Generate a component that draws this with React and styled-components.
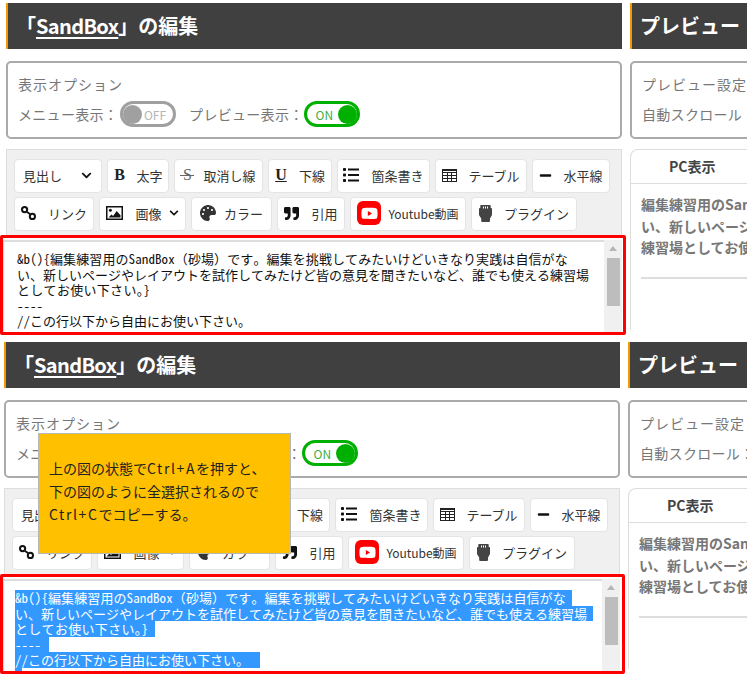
import React from "react";
import styled, { createGlobalStyle } from "styled-components";
import { FaMinus, FaChevronDown, FaPalette, FaQuoteRight, FaYoutube } from "react-icons/fa";

const GlobalStyle = createGlobalStyle`
  html, body { margin: 0; padding: 0; background: #fff; }
  body {
    width: 747px;
    height: 678px;
    overflow: hidden;
    font-family: "Noto Sans CJK JP", "Noto Sans", sans-serif;
  }
`;

const Page = styled.div`
  position: relative;
  width: 747px;
  height: 678px;
  overflow: hidden;
`;

const Capture = styled.div`
  display: grid;
  grid-template-columns: 616px 616px;
  column-gap: 8px;
  width: 1240px;
  height: 336px;
  padding: 3px 0 0 ${(p) => p.$left}px;
`;

const Column = styled.div`
  display: flex;
  flex-direction: column;
  min-width: 0;
`;

const PanelTitle = styled.h2`
  margin: 0 0 12px;
  height: 46px;
  box-sizing: border-box;
  padding-left: 8px;
  border-left: 2px solid #f39800;
  background: #404040;
  color: #fff;
  font-size: 20px;
  font-weight: 700;
  line-height: 46px;
  white-space: nowrap;

  a {
    color: #fff;
    letter-spacing: -0.65px;
    text-decoration: underline;
    text-underline-offset: 3px;
  }
`;

const OptionsBox = styled.div`
  height: 78px;
  box-sizing: border-box;
  margin-bottom: 10px;
  padding: 8px 10px 0;
  border: 2px solid #aaa;
  border-radius: 5px;
  color: #777;
  font-size: 14px;
  white-space: nowrap;
`;

const OptionsTitle = styled.div`
  height: 26px;
  line-height: 26px;
  letter-spacing: 1px;
`;

const OptionsRow = styled.div`
  display: flex;
  align-items: center;
  height: 30px;
  margin-top: 2px;
`;

const OptionLabel = styled.span`
  margin-right: ${(p) => p.$gap}px;
  letter-spacing: 0.3px;
`;

const Toggle = styled.div`
  display: flex;
  justify-content: space-between;
  align-items: center;
  width: 56px;
  height: 26px;
  box-sizing: border-box;
  margin-right: 13px;
  padding: ${(p) => (p.$on ? "0 0 0 9px" : "0 7px 0 0")};
  border: 3px solid ${(p) => (p.$on ? "#00b000" : "#a0a0a0")};
  border-radius: 13px;
  color: ${(p) => (p.$on ? "#3fae3f" : "#b5b5b5")};
  font-size: 12px;

  i {
    width: 19px;
    height: 19px;
    border-radius: 50%;
    background: ${(p) => (p.$on ? "#00b000" : "#a0a0a0")};
  }
`;

const EditorBox = styled.div`
  height: 186px;
  box-sizing: border-box;
  padding: 9px 0 0 7px;
  border: 1px solid #ddd;
  border-bottom: 0;
  background: #f0f0f0;
`;

const ToolRow = styled.div`
  display: flex;
  gap: 5px;
  height: 34px;
  margin-bottom: 4px;
`;

const ToolButton = styled.div`
  display: flex;
  align-items: center;
  justify-content: ${(p) => p.$justify || "center"};
  gap: ${(p) => p.$gap ?? 11}px;
  width: ${(p) => p.$w}px;
  box-sizing: border-box;
  padding: ${(p) => p.$pad || "0"};
  padding-bottom: 2px;
  border: 1px solid #e4e4e4;
  border-radius: 4px;
  background: #fff;
  color: #333;
  font-size: 13px;
  white-space: nowrap;

  svg { flex: none; color: #111; }
`;

const SerifMark = styled.span`
  position: relative;
  width: 12px;
  color: ${(p) => p.$color || "#222"};
  font-family: "Liberation Serif", serif;
  font-size: 16px;
  font-weight: ${(p) => (p.$strike ? 400 : 700)};
  line-height: 16px;
  text-align: center;
  text-decoration: ${(p) => (p.$under ? "underline" : "none")};

  &::after {
    content: "";
    display: ${(p) => (p.$strike ? "block" : "none")};
    position: absolute;
    left: -1px;
    right: -1px;
    top: 8px;
    height: 1px;
    background: #666;
  }
`;

const ImageLabel = styled.span`
  margin-left: 5px;
`;

const YoutubeMark = styled.span`
  display: flex;
  align-items: center;
  justify-content: center;
  width: 24px;
  height: 24px;
  border-radius: 6px;
  background: #f00;

  svg { color: #fff; }
`;

const SmallLabel = styled.span`
  font-size: 12px;
`;

const EditorFrame = styled.div`
  display: flex;
  height: 100px;
  box-sizing: border-box;
  margin: 0 ${(p) => p.$right}px 0 ${(p) => p.$left}px;
  padding-right: ${(p) => p.$gap}px;
  border: 3px solid #f00;
  border-radius: 2px;
  background: #fff;
`;

const TextArea = styled.div`
  flex: 1;
  min-width: 0;
  height: 92px;
  overflow: hidden;
  box-sizing: border-box;
  margin-top: 2px;
  padding: 9px 0 0 ${(p) => p.$left}px;
  border-top: 2px solid #ddd;
  border-left: 1px solid #ddd;
  color: #111;
  font-family: "Noto Sans Mono CJK JP", "Noto Sans CJK JP", monospace;
  font-size: 13px;
  line-height: 15.6px;
`;

const CodeLine = styled.div`
  width: fit-content;
  min-height: 15.6px;
  white-space: pre;
  letter-spacing: ${(p) => p.$spacing || 0}px;
  padding-right: ${(p) => (p.$selected ? p.$tail : 0)}px;
  background: ${(p) => (p.$selected ? "#3399ff" : "transparent")};
  color: ${(p) => (p.$selected ? "#fff" : "inherit")};
`;

const ScrollBar = styled.div`
  flex: none;
  display: flex;
  flex-direction: column;
  align-items: center;
  width: 18px;
  height: 92px;
  margin-top: 2px;
  padding-top: 6px;
  box-sizing: border-box;
  background: #f0f0f0;

  &::before {
    content: "";
    width: 0;
    height: 0;
    border: 4px solid transparent;
    border-top: 0;
    border-bottom: 5px solid #b5b5b5;
  }
`;

const ScrollThumb = styled.div`
  width: 13px;
  height: 48px;
  margin-top: 7px;
  background: #bdbdbd;
`;

const PreviewBox = styled.div`
  height: 181px;
  border: 1px solid #ddd;
  border-bottom: 0;
  border-top-left-radius: 8px;
  box-sizing: border-box;
`;

const PreviewTab = styled.div`
  height: 34px;
  box-sizing: border-box;
  padding-left: 38px;
  border-bottom: 1px solid #ddd;
  color: #444;
  font-size: 14px;
  font-weight: 700;
  line-height: 33px;
`;

const PreviewBody = styled.div`
  padding: 10px 10px 0;
  color: #777;
  font-size: 14px;
  font-weight: 700;
  line-height: 21.5px;
  white-space: nowrap;
`;

const PreviewRule = styled.div`
  height: 2px;
  margin: 18px 0 0;
  background: #ddd;
`;

const Note = styled.div`
  position: absolute;
  left: 38px;
  top: 433px;
  width: 253px;
  height: 121px;
  box-sizing: border-box;
  padding: 23px 10px 0;
  border: 1px solid #b7b7b7;
  background: #ffc000;
  color: #222;
  font-size: 14px;
  line-height: 23px;
  white-space: nowrap;
`;

const KeyName = styled.span`
  letter-spacing: 1.6px;
`;

const ListIcon = () => (
  <svg width="16" height="14" viewBox="0 0 16 14" fill="#111">
    <rect x="0" y="0" width="3" height="3" rx="0.8" />
    <rect x="0" y="5.5" width="3" height="3" rx="0.8" />
    <rect x="0" y="11" width="3" height="3" rx="0.8" />
    <rect x="5" y="0.5" width="11" height="2" />
    <rect x="5" y="6" width="11" height="2" />
    <rect x="5" y="11.5" width="11" height="2" />
  </svg>
);

const TableIcon = () => (
  <svg width="15" height="13" viewBox="0 0 15 13" fill="none" stroke="#222" strokeWidth="1">
    <rect x="0.5" y="0.5" width="14" height="12" />
    <path d="M0 3.5h15M0 6.5h15M0 9.5h15M5.5 3v10M9.500 3v10" />
    <rect x="0" y="0" width="15" height="2" fill="#222" stroke="none" />
  </svg>
);

const LinkIcon = () => (
  <svg width="15" height="14" viewBox="0 0 15 14" fill="none" stroke="#111" strokeWidth="2">
    <circle cx="3.6" cy="3.6" r="2.6" />
    <circle cx="11.4" cy="10.4" r="2.6" />
    <path d="M6 6l3 2" />
  </svg>
);

const PictureIcon = () => (
  <svg width="17" height="14" viewBox="0 0 17 14">
    <rect x="0.75" y="0.75" width="15.5" height="12.5" fill="#fff" stroke="#111" strokeWidth="1.5" />
    <circle cx="4.4" cy="4.2" r="1.5" fill="#111" />
    <path d="M2.5 11.5l3-3 1.6 1.4 3.6-4.9 3.8 4.3v2.2z" fill="#111" />
  </svg>
);

const PluginIcon = () => (
  <svg width="13" height="17" viewBox="0 0 13 17">
    <path d="M2 0h9a.7.7 0 0 1 .7.7V3h.5a.8.8 0 0 1 .8.8V10l-2 3.5V16a1 1 0 0 1-1 1H3.2a1 1 0 0 1-1-1v-2.500L0 10V3.800a.8.8 0 0 1 .8-.8h.5V.7A.7.7 0 0 1 2 0z" fill="#444" />
    <path d="M4 1.500h1v2H4zM6 1.500h1v2H6zM8 1.500h1v2H8z" fill="#fff" />
  </svg>
);

const lines = [
  { text: "&b(){編集練習用のSandBox（砂場）です。編集を挑戦してみたいけどいきなり実践は自信がな", spacing: 0.1, tail: 6 },
  { text: "い、新しいページやレイアウトを試作してみたけど皆の意見を聞きたいなど、誰でも使える練習場", spacing: 0, tail: 6 },
  { text: "としてお使い下さい。}", spacing: 0.3, tail: 7 },
  { text: "----", spacing: 0, tail: 8 },
  { text: "//この行以下から自由にお使い下さい。", spacing: 0, tail: 11 },
  { text: "", spacing: 0, tail: 7 },
];

const Panel = ({ selected, left, frame }) => (
  <Capture $left={left}>
    <Column>
      <PanelTitle>「<a>SandBox</a>」の編集</PanelTitle>
      <OptionsBox>
        <OptionsTitle>表示オプション</OptionsTitle>
        <OptionsRow>
          <OptionLabel $gap={2}>メニュー表示：</OptionLabel>
          <Toggle><i />OFF</Toggle>
          <OptionLabel $gap={0}>プレビュー表示：</OptionLabel>
          <Toggle $on>ON<i /></Toggle>
        </OptionsRow>
      </OptionsBox>
      <EditorBox>
        <ToolRow>
          <ToolButton $w={88} $justify="space-between" $pad="0 9px 0 8px">見出し<FaChevronDown size={11} /></ToolButton>
          <ToolButton $w={62}><SerifMark>B</SerifMark>太字</ToolButton>
          <ToolButton $w={89} $gap={10}><SerifMark $color="#666" $strike>S</SerifMark>取消し線</ToolButton>
          <ToolButton $w={64} $gap={12}><SerifMark $under>U</SerifMark>下線</ToolButton>
          <ToolButton $w={93} $gap={12}><ListIcon />箇条書き</ToolButton>
          <ToolButton $w={92}><TableIcon />テーブル</ToolButton>
          <ToolButton $w={78}><FaMinus size={13} />水平線</ToolButton>
        </ToolRow>
        <ToolRow>
          <ToolButton $w={80} $gap={12}><LinkIcon />リンク</ToolButton>
          <ToolButton $w={87} $gap={7}><PictureIcon /><ImageLabel>画像</ImageLabel><FaChevronDown size={10} /></ToolButton>
          <ToolButton $w={81} $gap={8}><FaPalette size={16} color="#333" />カラー</ToolButton>
          <ToolButton $w={68} $gap={12}><FaQuoteRight size={15} />引用</ToolButton>
          <ToolButton $w={116} $gap={7}><YoutubeMark><FaYoutube size={17} /></YoutubeMark><SmallLabel>Youtube動画</SmallLabel></ToolButton>
          <ToolButton $w={106} $gap={12}><PluginIcon />プラグイン</ToolButton>
        </ToolRow>
        <EditorFrame $left={frame.left} $right={frame.right} $gap={frame.gap}>
          <TextArea $left={frame.pad}>
            {lines.map((l, i) => (
              <CodeLine key={i} $selected={selected} $tail={l.tail} $spacing={l.spacing}>{l.text}</CodeLine>
            ))}
          </TextArea>
          <ScrollBar><ScrollThumb /></ScrollBar>
        </EditorFrame>
      </EditorBox>
    </Column>
    <Column>
      <PanelTitle>プレビュー</PanelTitle>
      <OptionsBox>
        <OptionsTitle>プレビュー設定</OptionsTitle>
        <OptionsRow><OptionLabel $gap={0}>自動スクロール：</OptionLabel></OptionsRow>
      </OptionsBox>
      <PreviewBox>
        <PreviewTab>PC表示</PreviewTab>
        <PreviewBody>
          <div>編集練習用のSandBox（砂場）です。</div>
          <div>い、新しいページやレイアウトを試作</div>
          <div>練習場としてお使い下さい。</div>
          <PreviewRule />
        </PreviewBody>
      </PreviewBox>
    </Column>
  </Capture>
);

const App = () => (
  <Page>
    <GlobalStyle />
    <Panel left={6} frame={{ left: -14, right: -5, gap: 1, pad: 13 }} />
    <Panel selected left={4} frame={{ left: -12, right: -6, gap: 2, pad: 11 }} />
    <Note>
      <div>上の図の状態で<KeyName>Ctrl+A</KeyName>を押すと、</div>
      <div>下の図のように全選択されるので</div>
      <div><KeyName>Ctrl+C</KeyName>でコピーする。</div>
    </Note>
  </Page>
);

export default App;
